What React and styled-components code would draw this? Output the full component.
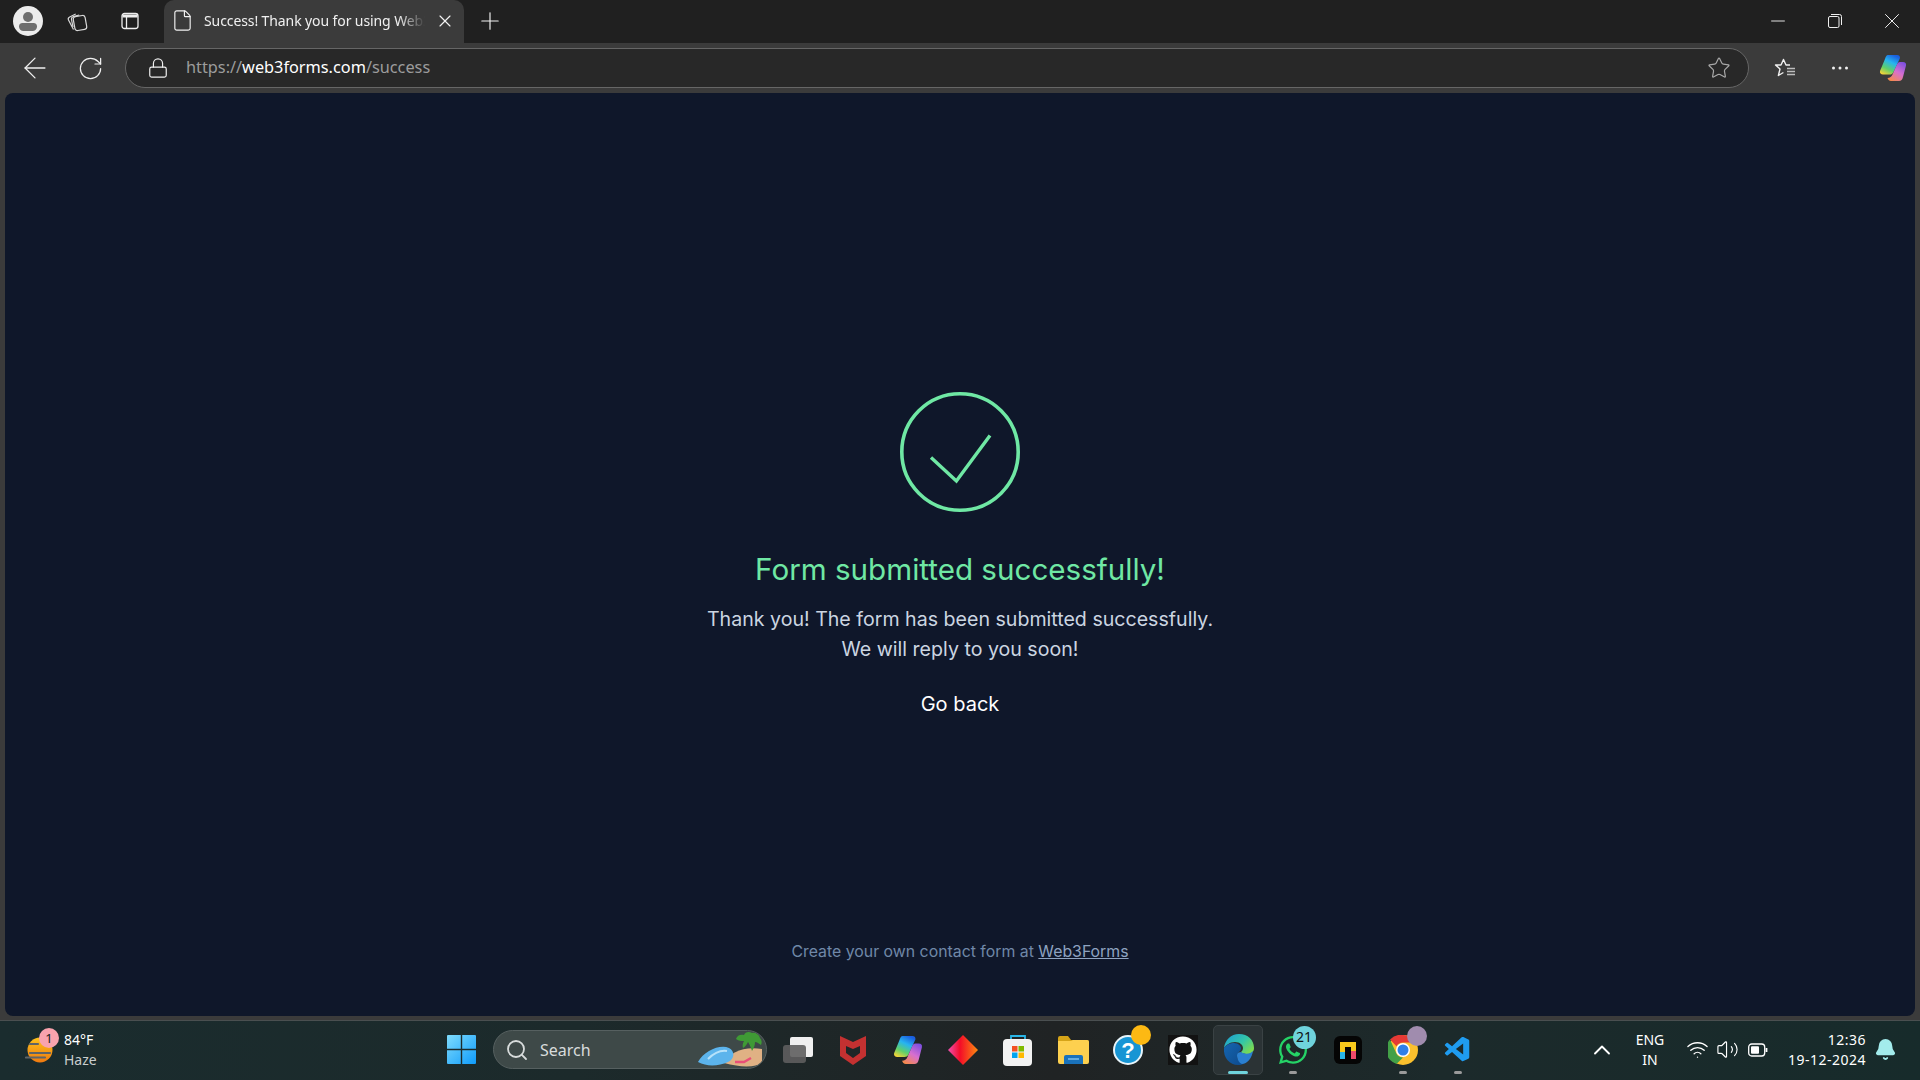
import React from 'react';
import styled, {createGlobalStyle} from 'styled-components';
import {ArrowLeft, RotateCw, Lock, Star, Plus, X, Minus, File, ChevronUp, Search, Volume2, Wifi, Bell} from 'lucide-react';
import {FaGithub, FaWhatsapp} from 'react-icons/fa';
import {VscVscode} from 'react-icons/vsc';

const GlobalStyle = createGlobalStyle`
  html, body {
    margin: 0;
    padding: 0;
    height: 100%;
    background: #3b3b3b;
    overflow: hidden;
  }
  #root { height: 100%; }
  * { box-sizing: border-box; }
`;

const uiFont = `"Noto Sans", "Open Sans", sans-serif`;
const pageFont = `Inter, "Noto Sans", sans-serif`;

const Screen = styled.div`
  width: 1920px;
  height: 1080px;
  display: flex;
  flex-direction: column;
  font-family: ${uiFont};
  background: #3b3b3b;
`;

const TitleBar = styled.div`
  height: 43px;
  padding-left: 6px;
  display: flex;
  align-items: stretch;
  background: #202020;
  color: #f2f2f2;
`;

const Slot = styled.div`
  flex: 0 0 ${p => p.$w}px;
  display: flex;
  align-items: center;
  justify-content: center;
`;

const TitleSlot = styled(Slot)`
  padding-bottom: 2px;
`;

const Spacer = styled.div`
  flex: 1;
`;

const Avatar = styled.div`
  width: 30px;
  height: 30px;
  border-radius: 50%;
  background: #ececec;
  overflow: hidden;
`;

const AvatarHead = styled.div`
  width: 10px;
  height: 10px;
  margin: 6px auto 1px;
  border-radius: 50%;
  background: #6e6e6e;
`;

const AvatarBody = styled.div`
  width: 18px;
  height: 8px;
  margin: 0 auto;
  border-radius: 4px 4px 5px 5px;
  background: #6e6e6e;
`;

const Tab = styled.div`
  flex: 0 0 300px;
  width: 300px;
  min-width: 0;
  margin-left: 8px;
  padding: 0 9px 2px 7px;
  display: flex;
  align-items: center;
  gap: 10px;
  background: #3b3b3b;
  border-radius: 10px 10px 0 0;
`;

const TabTitle = styled.div`
  flex: 1;
  min-width: 0;
  overflow: hidden;
  white-space: nowrap;
  font-size: 14px;
  letter-spacing: -0.1px;
  color: #f0f0f0;
  -webkit-mask-image: linear-gradient(to right, #000 88%, transparent 100%);
  mask-image: linear-gradient(to right, #000 88%, transparent 100%);
`;

const Toolbar = styled.div`
  height: 50px;
  padding: 5px 1px 5px 7px;
  display: flex;
  align-items: center;
  background: #3b3b3b;
  color: #efefef;
`;

const UrlBar = styled.div`
  flex: 1;
  height: 40px;
  margin-left: 8px;
  padding-left: 21px;
  display: flex;
  align-items: center;
  background: #282828;
  border: 1px solid #666666;
  border-radius: 20px;
`;

const UrlText = styled.div`
  margin-left: 17px;
  padding-bottom: 2px;
  font-size: 16.3px;
  color: #9c9c9c;
  b {
    font-weight: 400;
    color: #ffffff;
  }
`;

const UrlStar = styled.div`
  margin-left: auto;
  margin-right: 17px;
  display: flex;
  color: #a8a8a8;
`;

const Page = styled.main`
  flex: 1;
  margin: 0 5px 4px;
  display: flex;
  flex-direction: column;
  align-items: center;
  background: #0f172a;
  border-radius: 8px;
  font-family: ${pageFont};
`;

const Message = styled.div`
  padding-top: 299px;
  display: flex;
  flex-direction: column;
  align-items: center;
  text-align: center;
`;

const Heading = styled.h1`
  margin: 39px 0 0;
  font-size: 29.6px;
  line-height: 36px;
  font-weight: 400;
  color: #6fe8a4;
`;

const Sub = styled.p`
  margin: 17px 0 0;
  font-size: 19.6px;
  line-height: 30px;
  color: #cbd5e1;
`;

const Back = styled.a`
  margin-top: 25px;
  font-size: 20px;
  line-height: 30px;
  color: #ffffff;
`;

const Credit = styled.div`
  margin-top: auto;
  padding-bottom: 52px;
  font-size: 15.85px;
  line-height: 24px;
  color: #7088a8;
  a {
    color: #8ea3c0;
    text-decoration: underline;
  }
`;

const Taskbar = styled.footer`
  height: 60px;
  padding-bottom: 2px;
  display: flex;
  align-items: center;
  background: linear-gradient(to right, #1a2c2e 0%, #1c2a2b 30%, #202324 55%, #1c2a2b 75%, #172b2b 100%);
  border-top: 1px solid #4a4f50;
  color: #ffffff;
`;

const Weather = styled.div`
  flex: 0 0 437px;
  padding-left: 25px;
  display: flex;
  align-items: center;
`;

const WeatherIcon = styled.div`
  position: relative;
  width: 30px;
  height: 30px;
  margin-right: 9px;
`;

const WeatherBadge = styled.span`
  position: absolute;
  top: -7px;
  left: 14px;
  width: 20px;
  height: 20px;
  border-radius: 50%;
  background: #f9a3ae;
  color: #1c1c1c;
  font-size: 13px;
  line-height: 20px;
  text-align: center;
`;

const WeatherText = styled.div`
  font-size: 14px;
  line-height: 20px;
  span {
    display: block;
    color: #c9cdcd;
  }
`;

const SearchBox = styled.div`
  flex: 0 0 274px;
  height: 39px;
  margin-left: 8px;
  padding-left: 11px;
  display: flex;
  align-items: center;
  gap: 11px;
  position: relative;
  background: #3e4948;
  border: 1px solid #566060;
  border-radius: 20px;
  overflow: hidden;
  font-size: 16px;
  color: #d8dcdc;
`;

const BeachArt = styled.svg`
  position: absolute;
  right: 0;
  top: 0;
`;

const Apps = styled.div`
  margin-left: 3.5px;
  display: flex;
`;

const App_ = styled.div`
  position: relative;
  flex: 0 0 55px;
  height: 50px;
  display: flex;
  align-items: center;
  justify-content: center;
`;

const ActiveBox = styled.div`
  position: absolute;
  top: 0;
  left: 2px;
  width: 50px;
  height: 50px;
  background: #2b3335;
  border: 1px solid #3a4244;
  border-radius: 5px;
`;

const Running = styled.span`
  position: absolute;
  bottom: 1px;
  left: 50%;
  transform: translateX(-50%);
  width: ${p => (p.$active ? 20 : 8)}px;
  height: 3px;
  border-radius: 2px;
  background: ${p => (p.$active ? '#6fd3dc' : '#9a9a9a')};
`;

const CountBadge = styled.span`
  position: absolute;
  top: 1px;
  right: 5px;
  width: 23px;
  height: 23px;
  border-radius: 50%;
  background: ${p => p.$bg};
  color: #101010;
  font-size: 14px;
  line-height: 22px;
  text-align: center;
`;

const IconLayer = styled.div`
  position: relative;
  display: flex;
`;

const Tray = styled.div`
  margin-left: auto;
  padding-right: 16px;
  display: flex;
  align-items: center;
`;

const Lang = styled.div`
  flex: 0 0 56px;
  font-size: 14px;
  line-height: 20px;
  text-align: center;
`;

const Clock = styled.div`
  flex: 0 0 89px;
  font-size: 14px;
  line-height: 20px;
  text-align: right;
  letter-spacing: 0.5px;
  white-space: nowrap;
`;

const VoiceAvatar = styled.span`
  position: absolute;
  top: 1px;
  right: 4px;
  width: 20px;
  height: 20px;
  border-radius: 50%;
  background: #a08cae;
`;

const HelpDot = styled.span`
  position: absolute;
  top: 0;
  right: 5px;
  width: 20px;
  height: 20px;
  border-radius: 50%;
  background: #fdb913;
`;

const GithubTile = styled.div`
  width: 30px;
  height: 30px;
  display: flex;
  align-items: center;
  justify-content: center;
  background: #121212;
  color: #ffffff;
`;

const Collections = () => (
  <svg width="22" height="22" viewBox="0 0 22 22" fill="none" stroke="#d8d8d8" strokeWidth="1.2">
    <rect x="8" y="6" width="12" height="14" rx="2.5" transform="rotate(-10 14 13)" />
    <path d="M7.500 19.500 2.500 10c-.6-1.300 0-2.400 1.200-3l6-3" />
    <path d="M7 17 5.500 9.500c-.2-1.300.4-2.400 1.700-2.800l6-1.700" />
  </svg>
);

const TabsIcon = () => (
  <svg width="20" height="20" viewBox="0 0 20 20" fill="none" stroke="#efefef" strokeWidth="1.3">
    <rect x="2" y="2.500" width="16" height="15" rx="2.500" />
    <path d="M2.500 5h15" strokeWidth="3" />
    <path d="M6.500 6v11" />
  </svg>
);

const RestoreIcon = () => (
  <svg width="14" height="14" viewBox="0 0 14 14" fill="none" stroke="#f0f0f0" strokeWidth="1">
    <rect x="0.500" y="2.500" width="10.500" height="11" rx="1.500" />
    <path d="M3 .5h8.500a2 2 0 0 1 2 2V11" />
  </svg>
);

const FavBar = () => (
  <svg width="22" height="22" viewBox="0 0 22 22" fill="none" stroke="#f0f0f0" strokeWidth="1.400" strokeLinejoin="round">
    <path d="M16 8h-4L9.500 2.500 7 8H1.500L6 12l-1.600 6.500 5-3" />
    <path d="M13 11.500h8M13 14.500h8M13 17.500h8" stroke="#bdbdbd" />
  </svg>
);

const Dots = () => (
  <svg width="18" height="4" viewBox="0 0 18 4" fill="#f0f0f0">
    <circle cx="2.500" cy="2" r="1.500" />
    <circle cx="9" cy="2" r="1.500" />
    <circle cx="15.500" cy="2" r="1.500" />
  </svg>
);

const Copilot = ({id, size}) => (
  <svg width={size} height={size} viewBox="0 0 28 28">
    <defs>
      <linearGradient id={`${id}a`} x1="0.7" y1="0" x2="0.2" y2="1">
        <stop offset="0" stopColor="#1a5fe0" />
        <stop offset="0.35" stopColor="#27b4f0" />
        <stop offset="0.7" stopColor="#5fd06a" />
        <stop offset="1" stopColor="#f3d338" />
      </linearGradient>
      <linearGradient id={`${id}b`} x1="0.8" y1="0" x2="0.2" y2="1">
        <stop offset="0" stopColor="#7e4fe0" />
        <stop offset="0.5" stopColor="#d66fd0" />
        <stop offset="1" stopColor="#f68a4a" />
      </linearGradient>
    </defs>
    <path d="M9 1h9c2 0 3 1 3 3l-6 13c-1 3-2.600 3.500-5 3.500H4c-2 0-3.500-1.300-3-3.500L6 5c.6-2 1.500-4 3-4Z" fill={`url(#${id}a)`} />
    <path d="M21 8h3c2.200 0 3.500 1.200 3 3.500L24 23c-.6 2.500-1.800 4-4 4h-8c-2 0-3-1.500-3.500-3 2.500 0 4-1.200 5-3.500l4-9C18.500 9 19.500 8 21 8Z" fill={`url(#${id}b)`} />
  </svg>
);

const Sun = () => (
  <svg width="30" height="30" viewBox="0 0 30 30">
    <defs>
      <linearGradient id="sun" x1="0" y1="0" x2="0" y2="1">
        <stop offset="0" stopColor="#fdc21c" />
        <stop offset="1" stopColor="#ef7a10" />
      </linearGradient>
    </defs>
    <circle cx="15" cy="15" r="12.500" fill="url(#sun)" />
    <path d="M5 9h8M5 18h20M1 22.500h19" stroke="#5f6468" strokeWidth="2.200" strokeLinecap="round" />
  </svg>
);

const WinLogo = () => (
  <svg width="29" height="29" viewBox="0 0 29 29">
    <defs>
      <linearGradient id="win" x1="0" y1="0" x2="1" y2="1">
        <stop offset="0" stopColor="#7fdcfc" />
        <stop offset="1" stopColor="#0f9bfb" />
      </linearGradient>
    </defs>
    <path d="M1 0h12.800v13.800H0V1a1 1 0 0 1 1-1ZM15.200 0H28a1 1 0 0 1 1 1v12.800H15.200ZM0 15.200h13.800V29H1a1 1 0 0 1-1-1ZM15.200 15.200H29V28a1 1 0 0 1-1 1H15.200Z" fill="url(#win)" />
  </svg>
);

const Beach = () => (
  <BeachArt width="72" height="37" viewBox="0 0 72 37">
    <path d="M30 32c6-11 20-17 38-14v14c-6 4-20 5-38 0Z" fill="#e0b184" />
    <path d="M4 31C10 20 26 13 35 17c6 3 6 11-1 14-9 4-21 5-30 0Z" fill="#5cb4ec" />
    <path d="M14 28c6-6 13-9 19-8" stroke="#b7e2fa" strokeWidth="2" fill="none" />
    <path d="M41 31h9l7-4" stroke="#ea4f78" strokeWidth="2.500" fill="none" />
    <path d="M42 8c1-4 5-5 8-4 1-3 5-4 8-2 3-1 7 1 8 5 2 2 2 5 1 7-3-2-4-3-6-3 0 3-1 6-3 9-1-3-2-6-4-9-1 2-3 5-5 6-1-3 0-5 1-7-3 0-5 0-8-2Z" fill="#3f9a35" />
  </BeachArt>
);

const TaskView = () => (
  <svg width="30" height="26" viewBox="0 0 30 26">
    <rect x="7" y="0" width="23" height="20" rx="2" fill="#f0f0f0" />
    <rect x="0" y="8" width="23" height="18" rx="3" fill="#5e5e5e" opacity="0.9" />
  </svg>
);

const McAfee = () => (
  <svg width="28" height="30" viewBox="0 0 28 30">
    <path d="M1 1 14 7 27 1v20L14 30 1 21Z M7 11v7l7 5 7-5v-7l-7 3Z" fill="#c43131" fillRule="evenodd" />
  </svg>
);

const Diamond = () => (
  <svg width="30" height="30" viewBox="0 0 30 30">
    <defs>
      <linearGradient id="dia" x1="0" y1="0" x2="1" y2="0">
        <stop offset="0" stopColor="#f050b0" />
        <stop offset="0.4" stopColor="#f40c28" />
        <stop offset="1" stopColor="#fb8a10" />
      </linearGradient>
    </defs>
    <path d="M15 0 30 15 15 30 0 15Z" fill="url(#dia)" />
  </svg>
);

const Store = () => (
  <svg width="30" height="32" viewBox="0 0 30 32">
    <path d="M8 6V2h14v4" fill="none" stroke="#29b6e8" strokeWidth="1.800" />
    <rect x="0" y="5" width="29" height="27" rx="4" fill="#f2f2f2" />
    <rect x="9" y="12" width="5.500" height="5.500" fill="#f25022" />
    <rect x="15.500" y="12" width="5.500" height="5.500" fill="#7fba00" />
    <rect x="9" y="18.500" width="5.500" height="5.500" fill="#00a4ef" />
    <rect x="15.500" y="18.500" width="5.500" height="5.500" fill="#ffb900" />
  </svg>
);

const Folder = () => (
  <svg width="31" height="28" viewBox="0 0 31 28">
    <path d="M0 2a2 2 0 0 1 2-2h8l3 4h16a2 2 0 0 1 2 2v4H0Z" fill="#d6a418" />
    <path d="M0 5h13l2-1h14a2 2 0 0 1 2 2v20a2 2 0 0 1-2 2H2a2 2 0 0 1-2-2Z" fill="#fdd04f" />
    <path d="M6 28v-7a2 2 0 0 1 2-2h15a2 2 0 0 1 2 2v7Z" fill="#1a72bb" />
    <path d="M10 23h11" stroke="#7cc0ee" strokeWidth="1.500" />
  </svg>
);

const Help = () => (
  <svg width="30" height="30" viewBox="0 0 30 30">
    <circle cx="15" cy="15" r="14" fill="#1795d4" stroke="#e8f4fa" strokeWidth="2" />
    <text x="15" y="23" textAnchor="middle" fontSize="22" fontWeight="700" fontFamily="Liberation Sans, sans-serif" fill="#ffffff">?</text>
  </svg>
);

const Edge = () => (
  <svg width="31" height="31" viewBox="0 0 31 31">
    <defs>
      <linearGradient id="edgeTop" x1="0" y1="0" x2="1" y2="0.7">
        <stop offset="0" stopColor="#1c9bd8" />
        <stop offset="0.6" stopColor="#33c6a8" />
        <stop offset="1" stopColor="#7ddb50" />
      </linearGradient>
      <linearGradient id="edgeLow" x1="0" y1="0" x2="1" y2="1">
        <stop offset="0" stopColor="#1565b0" />
        <stop offset="1" stopColor="#0e4a8c" />
      </linearGradient>
    </defs>
    <path d="M1 14C2 6 8 0 16 0c9 0 15 6 15 14 0 4-3 6-7 6-3 0-6-1-6-2 1-1 2-2 2-4 0-3-3-6-8-6-5 0-9 3-11 6Z" fill="url(#edgeTop)" />
    <path d="M1 14c3-4 7-5 10-5 4 0 7 3 7 5 0 4-4 4-4 8 0 3 2 6 6 8-1 1-4 1-5 1C7 31 0 24 1 14Z" fill="url(#edgeLow)" />
    <path d="M14 21c0-2 2-3 4-3 3 2 8 3 12-1-1 7-6 13-11 13-3-1-5-5-5-9Z" fill="#2a7fd0" />
  </svg>
);

const Nimbus = () => (
  <svg width="28" height="28" viewBox="0 0 28 28">
    <rect width="28" height="28" rx="6" fill="#050505" />
    <path d="M6 23V6h16v17h-5V11h-6v12Z" fill="#f8c91c" />
    <path d="M6 23v-7h5v7Z" fill="#29b6e8" />
    <path d="M17 23v-8h5v8Z" fill="#ef4a6a" />
  </svg>
);

const Chrome = () => (
  <svg width="30" height="30" viewBox="0 0 30 30">
    <circle cx="15" cy="15" r="15" fill="#fbc02d" />
    <path d="M15 0a15 15 0 0 1 13 7.500H15a7.500 7.500 0 0 0-6.500 3.750L2 4.500A15 15 0 0 1 15 0Z" fill="#e53935" />
    <path d="M2 4.500 8.500 18.750A7.500 7.500 0 0 0 15 22.500L8.500 29A15 15 0 0 1 2 4.500Z" fill="#43a047" />
    <circle cx="15" cy="15" r="7" fill="#ffffff" />
    <circle cx="15" cy="15" r="5.500" fill="#2f7fe8" />
  </svg>
);

const BatteryIcon = () => (
  <svg width="20" height="14" viewBox="0 0 20 14" fill="none">
    <rect x="0.700" y="1" width="16" height="12" rx="3" stroke="#fff" strokeWidth="1.300" />
    <rect x="3" y="3.200" width="8" height="7.600" rx="1" fill="#fff" />
    <path d="M18.500 5v4" stroke="#fff" strokeWidth="1.800" />
  </svg>
);

const App = () => (
  <Screen>
    <GlobalStyle />
    <TitleBar>
      <TitleSlot $w={44}>
        <Avatar>
          <AvatarHead />
          <AvatarBody />
        </Avatar>
      </TitleSlot>
      <TitleSlot $w={54}><Collections /></TitleSlot>
      <TitleSlot $w={52}><TabsIcon /></TitleSlot>
      <Tab>
        <File size={23} strokeWidth={1.2} />
        <TabTitle>Success! Thank you for using Web3Forms</TabTitle>
        <X size={20} strokeWidth={1.4} />
      </Tab>
      <TitleSlot $w={52}><Plus size={28} strokeWidth={1} /></TitleSlot>
      <Spacer />
      <TitleSlot $w={57}><Minus size={22} strokeWidth={1} /></TitleSlot>
      <TitleSlot $w={57}><RestoreIcon /></TitleSlot>
      <TitleSlot $w={57}><X size={26} strokeWidth={0.9} /></TitleSlot>
    </TitleBar>
    <Toolbar>
      <Slot $w={56}><ArrowLeft size={34} strokeWidth={0.9} /></Slot>
      <Slot $w={54}><RotateCw size={27} strokeWidth={1.1} /></Slot>
      <UrlBar>
        <Lock size={22} strokeWidth={1.3} />
        <UrlText>https://<b>web3forms.com</b>/success</UrlText>
        <UrlStar><Star size={24} strokeWidth={1.2} /></UrlStar>
      </UrlBar>
      <Slot $w={8} />
      <Slot $w={56}><FavBar /></Slot>
      <Slot $w={54}><Dots /></Slot>
      <Slot $w={52}><Copilot id="cpa" size={28} /></Slot>
    </Toolbar>
    <Page>
      <Message>
        <svg width="120" height="120" viewBox="0 0 120 120" fill="none" stroke="#6fe8a4">
          <circle cx="60" cy="60" r="58.200" strokeWidth="3.600" />
          <path d="M31 65.500 L56.400 89 L90 43.400" strokeWidth="3.400" />
        </svg>
        <Heading>Form submitted successfully!</Heading>
        <Sub>
          Thank you! The form has been submitted successfully.
          <br />
          We will reply to you soon!
        </Sub>
        <Back>Go back</Back>
      </Message>
      <Credit>
        Create your own contact form at <a>Web3Forms</a>
      </Credit>
    </Page>
    <Taskbar>
      <Weather>
        <WeatherIcon>
          <Sun />
          <WeatherBadge>1</WeatherBadge>
        </WeatherIcon>
        <WeatherText>
          84°F
          <span>Haze</span>
        </WeatherText>
      </Weather>
      <Slot $w={48}><WinLogo /></Slot>
      <SearchBox>
        <Search size={24} strokeWidth={1.8} />
        Search
        <Beach />
      </SearchBox>
      <Apps>
        <App_><TaskView /></App_>
        <App_><McAfee /></App_>
        <App_><Copilot id="cpb" size={30} /></App_>
        <App_><Diamond /></App_>
        <App_><Store /></App_>
        <App_><Folder /></App_>
        <App_><Help /><HelpDot /></App_>
        <App_><GithubTile><FaGithub size={28} /></GithubTile></App_>
        <App_>
          <ActiveBox />
          <IconLayer><Edge /></IconLayer>
          <Running $active />
        </App_>
        <App_>
          <FaWhatsapp size={32} color="#25d366" />
          <CountBadge $bg="#6fd3dc">21</CountBadge>
          <Running />
        </App_>
        <App_><Nimbus /></App_>
        <App_>
          <Chrome />
          <VoiceAvatar />
          <Running />
        </App_>
        <App_>
          <VscVscode size={30} color="#1f9cf0" />
          <Running />
        </App_>
      </Apps>
      <Tray>
        <Slot $w={40}><ChevronUp size={28} strokeWidth={1.6} /></Slot>
        <Lang>ENG<br />IN</Lang>
        <Slot $w={38}><Wifi size={23} strokeWidth={1.4} /></Slot>
        <Slot $w={22}><Volume2 size={23} strokeWidth={1.2} /></Slot>
        <Slot $w={38}><BatteryIcon /></Slot>
        <Clock>12:36<br />19-12-2024</Clock>
        <Slot $w={38}><Bell size={23} fill="#a3ecec" color="#a3ecec" /></Slot>
      </Tray>
    </Taskbar>
  </Screen>
);

export default App;
